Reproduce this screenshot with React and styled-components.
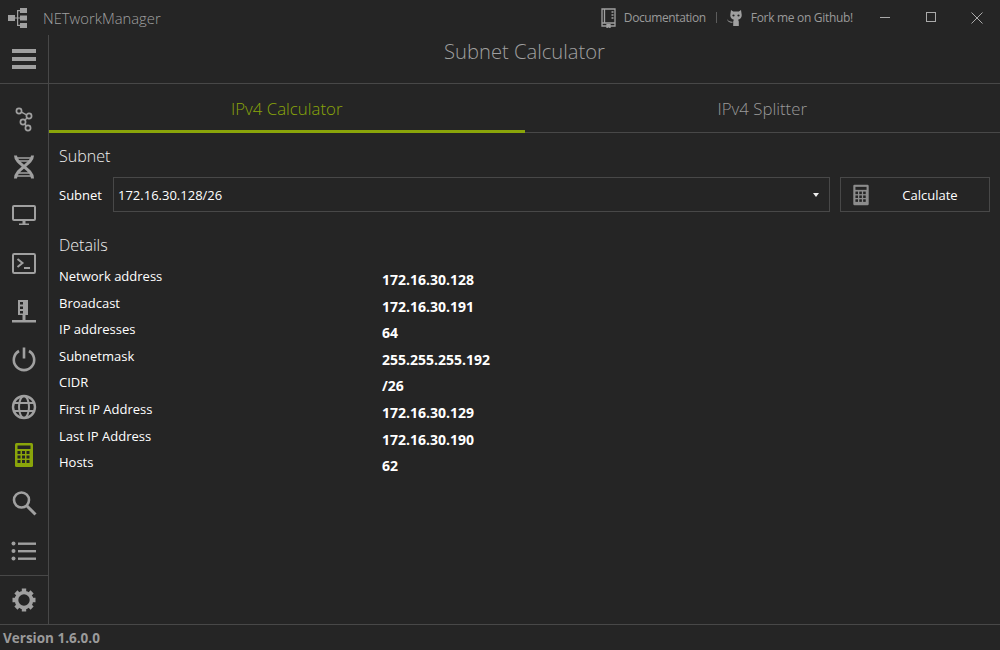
import React from "react";
import styled, { createGlobalStyle } from "styled-components";

const Global = createGlobalStyle`
  html, body { margin: 0; padding: 0; background: #252525; }
  * { box-sizing: border-box; }
`;

const GREEN = "#8aa50a";
const GREY = "#a0a0a0";
const LINE = "#484848";

const rows = [
  ["Network address", "172.16.30.128"],
  ["Broadcast", "172.16.30.191"],
  ["IP addresses", "64"],
  ["Subnetmask", "255.255.255.192"],
  ["CIDR", "/26"],
  ["First IP Address", "172.16.30.129"],
  ["Last IP Address", "172.16.30.190"],
  ["Hosts", "62"],
];

const Svg = ({ size = 28, children, color = GREY }) => (
  <svg width={size} height={size} viewBox="0 0 28 28" fill="none" stroke={color} strokeWidth="2">
    {children}
  </svg>
);

const Calc = ({ size, color }) => (
  <svg width={size} height={size} viewBox="0 0 28 28">
    <rect x="5" y="2" width="18" height="24" rx="1.5" fill={color} />
    <rect x="7.5" y="4.5" width="13" height="3.5" fill="#252525" />
    {[10, 14.5, 19].map((y) =>
      [7.5, 12, 16.5].map((x) => <rect key={x + "-" + y} x={x} y={y} width="3" height="3" fill="#252525" />)
    )}
  </svg>
);

const icons = [
  <Svg key="a">
    <circle cx="9" cy="6" r="2.6" strokeWidth="1.7" />
    <circle cx="19" cy="11" r="2.6" strokeWidth="1.7" />
    <circle cx="13" cy="17" r="2.6" strokeWidth="1.7" />
    <circle cx="18" cy="23" r="2.6" strokeWidth="1.7" />
    <path d="M11.4 7.200l5.200 2.600M17 13l-2 2M14.700 19l1.600 2" strokeWidth="1.500" />
  </Svg>,
  <Svg key="b">
    <path d="M5.500 2.500c0 9 17 13 17 23M22.500 2.500c0 9-17 13-17 23" strokeWidth="3" />
    <path d="M7 5h14M9 8h10M9 20h10M7 23h14" strokeWidth="1.500" />
  </Svg>,
  <Svg key="c">
    <rect x="3" y="5" width="22" height="14" rx="1" />
    <path d="M12.500 20h3v2.500h3.500v1.500H9v-1.500h3.500z" fill={GREY} stroke="none" />
  </Svg>,
  <Svg key="d">
    <rect x="3" y="5" width="22" height="19" rx="1.200" />
    <path d="M7.500 10l5 4-5 4M14 19h6" />
  </Svg>,
  <svg key="e" width="28" height="28" viewBox="0 0 28 28">
    <path d="M8 3h10v15H8z" fill={GREY} />
    <path d="M10 5h3v2.500h-3zM10 9.500h3V12h-3zM10 14h3v2.500h-3z" fill="#252525" />
    <path d="M12.500 18h3v5h10.500v2.500H2V23h10.500z" fill={GREY} />
  </svg>,
  <Svg key="f">
    <path d="M14 2.500v11" strokeWidth="2.600" />
    <path d="M9 6a10.200 10.200 0 1 0 10 0" strokeWidth="2.600" />
  </Svg>,
  <Svg key="g">
    <circle cx="14" cy="14" r="11" strokeWidth="2.400" />
    <ellipse cx="14" cy="14" rx="5" ry="11" />
    <path d="M3.500 10h21M3.500 18h21" />
  </Svg>,
  <Calc key="h" size={28} color={GREEN} />,
  <Svg key="i">
    <circle cx="11.500" cy="11" r="7.500" strokeWidth="2.600" />
    <path d="M17 17l8.500 8.500" strokeWidth="3" />
  </Svg>,
  <svg key="j" width="28" height="28" viewBox="0 0 28 28">
    <g fill={GREY}>
      <circle cx="3.500" cy="6.500" r="2" />
      <circle cx="3.500" cy="14" r="2" />
      <circle cx="3.500" cy="21.500" r="2" />
      <rect x="8" y="5.500" width="18" height="2.400" />
      <rect x="8" y="13" width="18" height="2.400" />
      <rect x="8" y="20.500" width="18" height="2.400" />
    </g>
  </svg>,
];

const App = () => (
  <Page>
    <Global />
    <TitleBar>
      <BrandIcon>
        <svg width="20" height="20" viewBox="0 0 20 20" fill={GREY}>
          <rect x="0" y="7" width="7" height="6" />
          <rect x="12" y="0" width="7" height="5" />
          <rect x="12" y="7.500" width="7" height="5" />
          <rect x="12" y="15" width="7" height="5" />
          <path d="M7 9.500h2V2h3v1.200h-1.800v6.300H12v1h-1.800v6.300H12V18H9v-7.500H7z" />
        </svg>
      </BrandIcon>
      <AppName>NETworkManager</AppName>
      <TitleLinks>
        <svg width="15" height="20" viewBox="0 0 15 20" fill="none" stroke={GREY} strokeWidth="1.300">
          <path d="M1 1h13v14H1zM1 15v3h13v-3M3.500 1v14" />
          <path d="M6 16v3.500l1.500-1 1.500 1V16" fill={GREY} />
          <path d="M10.500 4h2M10.500 7h2M10.500 10h2" />
        </svg>
        <DocText>Documentation</DocText>
        <Sep />
        <svg width="18" height="20" viewBox="0 0 18 20" fill={GREY}>
          <path d="M4 2l2.200 1.500h5.600L14 2l.6 4c.6 3-1 5.200-3.600 5.800.5.500.8 1.200.8 2V18H6.200v-4.200c0-.8.300-1.500.8-2C4.400 11.200 2.800 9 3.400 6z" />
          <path d="M0 11c1 1.500 2.500 3 5.500 2.800v1C2.500 15 .5 13.500 0 11z" />
          <circle cx="6.500" cy="7.500" r="1.100" fill="#252525" />
          <circle cx="11.500" cy="7.500" r="1.100" fill="#252525" />
        </svg>
        <LinkText>Fork me on Github!</LinkText>
      </TitleLinks>
      <WinButton>
        <svg width="12" height="12" viewBox="0 0 12 12" stroke="#aaa" fill="none"><path d="M1 5.500h10" /></svg>
      </WinButton>
      <WinButton>
        <svg width="12" height="12" viewBox="0 0 12 12" stroke="#aaa" fill="none"><rect x="1.500" y=".5" width="9" height="9" /></svg>
      </WinButton>
      <WinButton>
        <svg width="12" height="12" viewBox="0 0 12 12" stroke="#aaa" fill="none"><path d="M.5 .5l11 11M11.500 .5l-11 11" /></svg>
      </WinButton>
    </TitleBar>
    <Body>
      <Sidebar>
        <MenuButton>
          <svg width="24" height="20" viewBox="0 0 24 20" fill={GREY}>
            <rect y="0" width="24" height="4" />
            <rect y="8" width="24" height="4" />
            <rect y="16" width="24" height="4" />
          </svg>
        </MenuButton>
        <NavList>
          {icons.map((icon, i) => (
            <NavItem key={i}>{icon}</NavItem>
          ))}
        </NavList>
        <SettingsItem>
          <svg width="26" height="26" viewBox="0 0 26 26" fill="none" stroke={GREY}>
            <circle cx="13" cy="13" r="7.500" strokeWidth="3.600" />
            <path
              d="M13 1.500v4M13 20.500v4M1.500 13h4M20.500 13h4M4.900 4.900l2.800 2.800M18.300 18.300l2.800 2.800M21.100 4.900l-2.800 2.800M7.700 18.300l-2.800 2.800"
              strokeWidth="4.400"
            />
          </svg>
        </SettingsItem>
      </Sidebar>
      <Main>
        <Heading>Subnet Calculator</Heading>
        <Tabs>
          <Tab $active>IPv4 Calculator</Tab>
          <Tab>IPv4 Splitter</Tab>
        </Tabs>
        <Content>
          <SectionTitle>Subnet</SectionTitle>
          <InputRow>
            <FieldLabel>Subnet</FieldLabel>
            <Combo>
              <ComboValue>172.16.30.128/26</ComboValue>
              <Caret />
            </Combo>
            <CalcButton>
              <Calc size={24} color="#8c8c8c" />
              <CalcLabel>Calculate</CalcLabel>
            </CalcButton>
          </InputRow>
          <DetailsTitle>Details</DetailsTitle>
          <Details>
            {rows.map(([label, value]) => (
              <Row key={label}>
                <RowLabel>{label}</RowLabel>
                <RowValue>{value}</RowValue>
              </Row>
            ))}
          </Details>
        </Content>
      </Main>
    </Body>
    <StatusBar>Version 1.6.0.0</StatusBar>
  </Page>
);

export default App;

const Page = styled.div`
  width: 1000px;
  height: 650px;
  background: #252525;
  color: #fff;
  font-family: "Open Sans", "Liberation Sans", sans-serif;
  display: flex;
  flex-direction: column;
  overflow: hidden;
`;
const TitleBar = styled.div`
  height: 35px;
  display: flex;
  align-items: center;
  flex: none;
`;
const BrandIcon = styled.div`
  width: 43px;
  padding-left: 8px;
  display: flex;
`;
const AppName = styled.div`
  font-size: 14.800px;
  font-weight: 300;
  color: #a0a0a0;
`;
const TitleLinks = styled.div`
  margin-left: auto;
  margin-right: 0;
  display: flex;
  align-items: center;
  font-size: 12px;
  color: #9a9a9a;
`;
const DocText = styled.span`
  margin: 0 10px 0 8px;
  letter-spacing: -0.4px;
`;
const LinkText = styled.span`
  margin: 0 9px 0 6px;
  letter-spacing: -0.3px;
`;
const Sep = styled.span`
  width: 1px;
  height: 11px;
  background: #5c5c5c;
  margin-right: 10px;
`;
const WinButton = styled.div`
  width: 46px;
  height: 32px;
  display: flex;
  align-items: center;
  justify-content: center;
`;
const Body = styled.div`
  flex: 1;
  display: flex;
  min-height: 0;
`;
const Sidebar = styled.div`
  width: 49px;
  flex: none;
  border-right: 1px solid ${LINE};
  display: flex;
  flex-direction: column;
`;
const MenuButton = styled.div`
  height: 49px;
  border-bottom: 1px solid ${LINE};
  display: flex;
  align-items: center;
  justify-content: center;
`;
const NavList = styled.div`
  flex: 1;
  padding-top: 11px;
`;
const NavItem = styled.div`
  height: 48px;
  display: flex;
  align-items: center;
  justify-content: center;
`;
const SettingsItem = styled.div`
  height: 49px;
  border-top: 1px solid ${LINE};
  display: flex;
  align-items: center;
  justify-content: center;
`;
const Main = styled.div`
  flex: 1;
  display: flex;
  flex-direction: column;
  min-width: 0;
`;
const Heading = styled.div`
  height: 49px;
  border-bottom: 1px solid ${LINE};
  display: flex;
  justify-content: center;
  font-size: 20.200px;
  font-weight: 300;
  line-height: 33px;
  color: #a0a0a0;
`;
const Tabs = styled.div`
  height: 49px;
  display: flex;
  border-bottom: 1px solid ${LINE};
`;
const Tab = styled.div`
  flex: 1;
  text-align: center;
  font-size: 16.800px;
  font-weight: 300;
  line-height: 49px;
  color: ${(p) => (p.$active ? GREEN : "#9a9a9a")};
  border-bottom: ${(p) => (p.$active ? `3px solid ${GREEN}` : "none")};
  height: 49px;
`;
const Content = styled.div`
  padding: 12px 10px 0;
`;
const SectionTitle = styled.div`
  font-size: 16px;
  font-weight: 300;
  line-height: 22px;
  color: #f0f0f0;
`;
const InputRow = styled.div`
  display: flex;
  align-items: center;
  margin-top: 10px;
  height: 35px;
`;
const FieldLabel = styled.div`
  width: 54px;
  font-size: 13px;
`;
const Combo = styled.div`
  width: 717px;
  height: 35px;
  border: 1px solid ${LINE};
  display: flex;
  align-items: center;
  padding: 0 10px 0 4px;
`;
const ComboValue = styled.div`
  flex: 1;
  font-size: 13px;
`;
const Caret = styled.span`
  width: 0;
  height: 0;
  border-left: 3px solid transparent;
  border-right: 3px solid transparent;
  border-top: 4px solid #eee;
`;
const CalcButton = styled.div`
  width: 150px;
  height: 35px;
  margin-left: 10px;
  border: 1px solid ${LINE};
  display: flex;
  align-items: center;
  padding-left: 8px;
`;
const CalcLabel = styled.div`
  flex: 1;
  text-align: center;
  font-size: 13px;
  padding-right: 2px;
`;
const DetailsTitle = styled(SectionTitle)`
  margin-top: 22px;
`;
const Details = styled.div`
  margin-top: 10px;
  display: flex;
  flex-direction: column;
`;
const Row = styled.div`
  height: 26.600px;
  display: grid;
  grid-template-columns: 323px 1fr;
`;
const RowLabel = styled.div`
  font-size: 13px;
  line-height: 20px;
`;
const RowValue = styled.div`
  font-size: 14px;
  font-weight: 700;
  line-height: 20px;
  padding-top: 4px;
`;
const StatusBar = styled.div`
  height: 26px;
  flex: none;
  border-top: 1px solid ${LINE};
  padding-left: 3px;
  font-size: 13.500px;
  font-weight: 700;
  line-height: 26px;
  color: #9a9a9a;
`;
